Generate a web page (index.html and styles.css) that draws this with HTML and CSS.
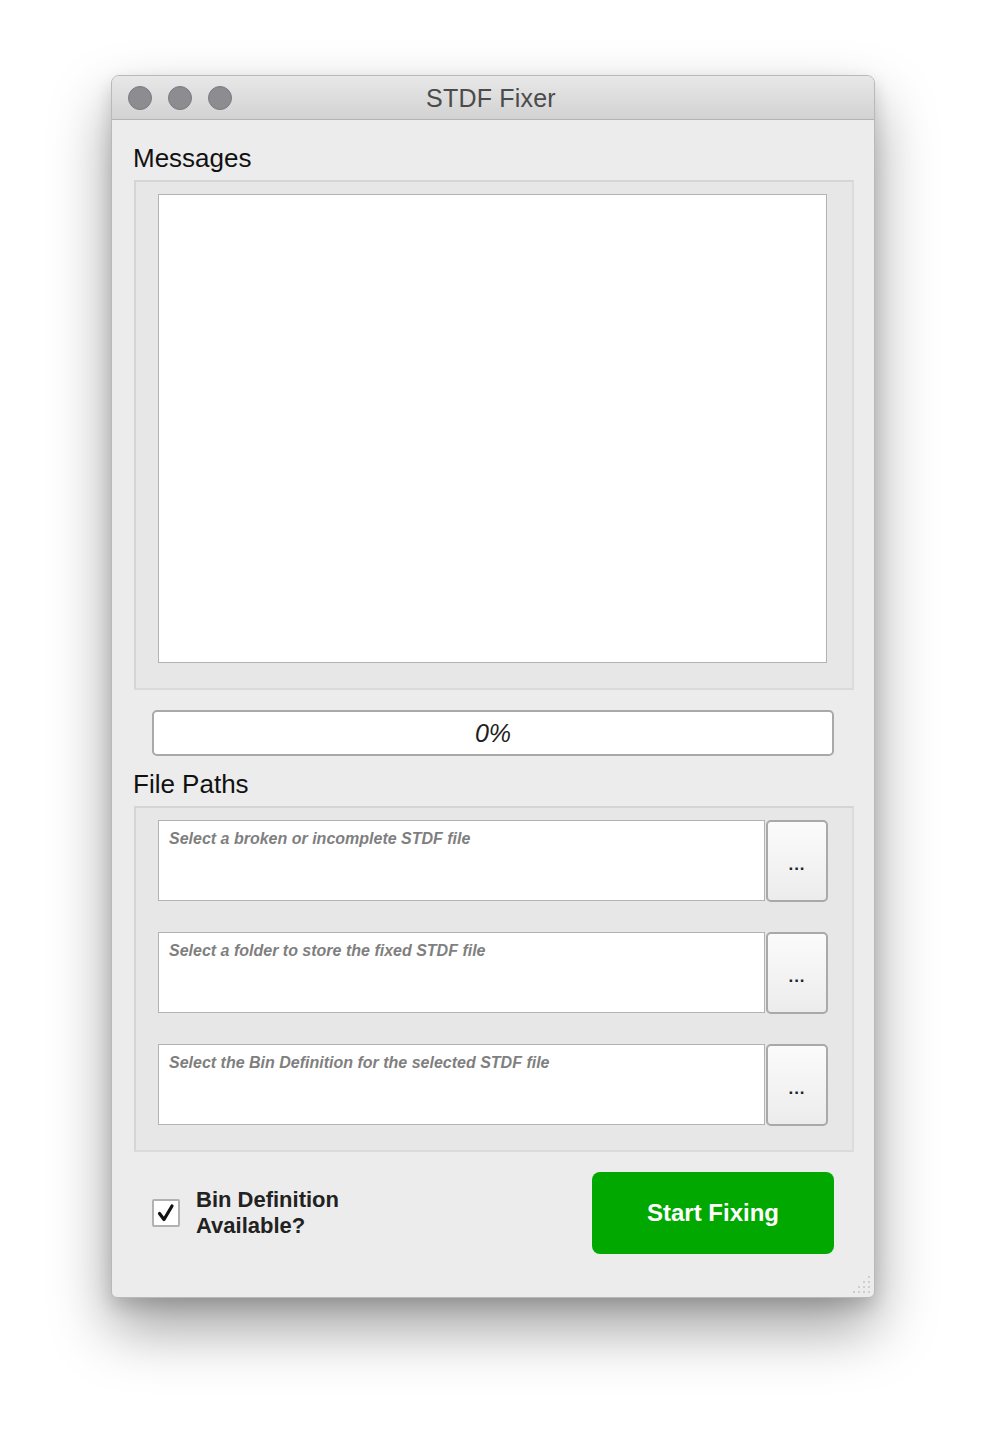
FILE: index.html
```html
<!DOCTYPE html>
<html>
<head>
<meta charset="utf-8">
<link rel="stylesheet" href="styles.css">
</head>
<body>
<div class="window">
  <div class="titlebar">
    <div class="lights">
      <span class="light"></span><span class="light"></span><span class="light"></span>
    </div>
    <div class="title">STDF Fixer</div>
  </div>
  <div class="content">
    <div class="section-label">Messages</div>
    <div class="group group-messages">
      <div class="textarea"></div>
    </div>
    <div class="progress"><span>0%</span></div>
    <div class="section-label section-label-paths">File Paths</div>
    <div class="group group-paths">
      <div class="path-row">
        <div class="path-input">Select a broken or incomplete STDF file</div>
        <div class="browse">...</div>
      </div>
      <div class="path-row">
        <div class="path-input">Select a folder to store the fixed STDF file</div>
        <div class="browse">...</div>
      </div>
      <div class="path-row">
        <div class="path-input">Select the Bin Definition for the selected STDF file</div>
        <div class="browse">...</div>
      </div>
    </div>
    <div class="bottom-row">
      <div class="check-wrap">
        <div class="checkbox">
          <svg width="20" height="20" viewBox="0 0 20 20"><path d="M3.5 10.5 L8 16.5 L16 3" fill="none" stroke="#111" stroke-width="3.2" stroke-linecap="round" stroke-linejoin="round"/></svg>
        </div>
        <div class="check-label">Bin Definition<br>Available?</div>
      </div>
      <div class="start-btn">Start Fixing</div>
    </div>
  </div>
  <svg class="grip" width="22" height="22" viewBox="0 0 22 22">
    <g fill="#c4c4c4">
      <circle cx="19" cy="4" r="1"/>
      <circle cx="19" cy="9" r="1"/><circle cx="14" cy="9" r="1"/>
      <circle cx="19" cy="14" r="1"/><circle cx="14" cy="14" r="1"/><circle cx="9" cy="14" r="1"/>
      <circle cx="19" cy="19" r="1"/><circle cx="14" cy="19" r="1"/><circle cx="9" cy="19" r="1"/><circle cx="4" cy="19" r="1"/>
    </g>
  </svg>
</div>
</body>
</html>
```

FILE: styles.css
```css
html, body {
  margin: 0;
  padding: 0;
  background: #ffffff;
}
body {
  font-family: "Liberation Sans", Arial, sans-serif;
  height: 1446px;
  overflow: hidden;
}
.window {
  position: relative;
  margin: 75px 0 0 111px;
  width: 764px;
  height: 1223px;
  box-sizing: border-box;
  background: #ececec;
  border-radius: 8px 8px 6px 6px;
  border: 1px solid #b9b9b9;
  box-shadow: 0 30px 60px rgba(0, 0, 0, 0.38), 0 8px 18px rgba(0, 0, 0, 0.14);
  overflow: hidden;
}
.titlebar {
  position: relative;
  height: 43px;
  background: linear-gradient(#e8e8e8, #d2d2d2);
  border-bottom: 1px solid #b4b4b4;
  display: flex;
  align-items: center;
  justify-content: center;
}
.lights {
  position: absolute;
  left: 16px;
  top: 10px;
  display: flex;
  gap: 16px;
}
.light {
  width: 22px;
  height: 22px;
  border-radius: 50%;
  background: #8d8c91;
  border: 1px solid #7b7a7f;
}
.title {
  font-size: 25px;
  color: #4b4b4b;
  letter-spacing: 0.2px;
  padding: 2px 4px 0 0;
}
.content {
  display: flex;
  flex-direction: column;
  align-items: flex-start;
}
.section-label {
  margin: 23px 0 7px 21px;
  height: 30px;
  line-height: 30px;
  font-size: 26px;
  color: #111;
}
.section-label-paths {
  margin-top: 13px;
}
.group {
  margin-left: 22px;
  width: 720px;
  box-sizing: border-box;
  background: #e7e7e7;
  border: 2px solid #d5d5d5;
  border-right-color: #dcdcdc;
  border-bottom-color: #dadada;
}
.group-messages {
  height: 510px;
  padding: 12px 25px 0 22px;
}
.textarea {
  width: 669px;
  height: 469px;
  box-sizing: border-box;
  background: #ffffff;
  border: 1px solid #b3b3b3;
}
.progress {
  margin: 20px 0 0 40px;
  width: 682px;
  height: 46px;
  box-sizing: border-box;
  background: #ffffff;
  border: 2px solid #a9a9a9;
  border-radius: 5px;
  display: flex;
  align-items: center;
  justify-content: center;
  font-size: 25px;
  font-style: italic;
  color: #1e1e1e;
}
.group-paths {
  height: 346px;
  padding: 12px 0 0 22px;
  display: flex;
  flex-direction: column;
  gap: 30px;
}
.path-row {
  display: flex;
  align-items: flex-start;
  gap: 1px;
}
.path-input {
  width: 607px;
  height: 81px;
  box-sizing: border-box;
  background: #ffffff;
  border: 1px solid #b3b3b3;
  padding: 9px 0 0 10px;
  font-size: 16px;
  font-weight: bold;
  font-style: italic;
  color: #7f7f7f;
  line-height: 18px;
}
.browse {
  width: 62px;
  height: 82px;
  box-sizing: border-box;
  border: 2px solid #a9a9a9;
  border-radius: 5px;
  background: linear-gradient(#fbfbfb, #ececec);
  display: flex;
  align-items: center;
  justify-content: center;
  font-size: 17px;
  font-weight: bold;
  color: #222;
  letter-spacing: 1px;
  padding-top: 8px;
}
.bottom-row {
  margin-top: 20px;
  width: 100%;
  display: flex;
  align-items: center;
  justify-content: space-between;
  box-sizing: border-box;
  padding: 0 40px 0 40px;
}
.check-wrap {
  display: flex;
  align-items: center;
  gap: 16px;
}
.checkbox {
  width: 28px;
  height: 28px;
  box-sizing: border-box;
  background: #ffffff;
  border: 2px solid #b2b2b2;
  border-radius: 2px;
  display: flex;
  align-items: center;
  justify-content: center;
}
.check-label {
  font-size: 22px;
  font-weight: bold;
  line-height: 26px;
  color: #222;
}
.start-btn {
  width: 242px;
  height: 82px;
  border-radius: 8px;
  background: #00a800;
  color: #ffffff;
  font-size: 24px;
  font-weight: bold;
  display: flex;
  align-items: center;
  justify-content: center;
}
.grip {
  position: absolute;
  right: 2px;
  bottom: 2px;
}
```
